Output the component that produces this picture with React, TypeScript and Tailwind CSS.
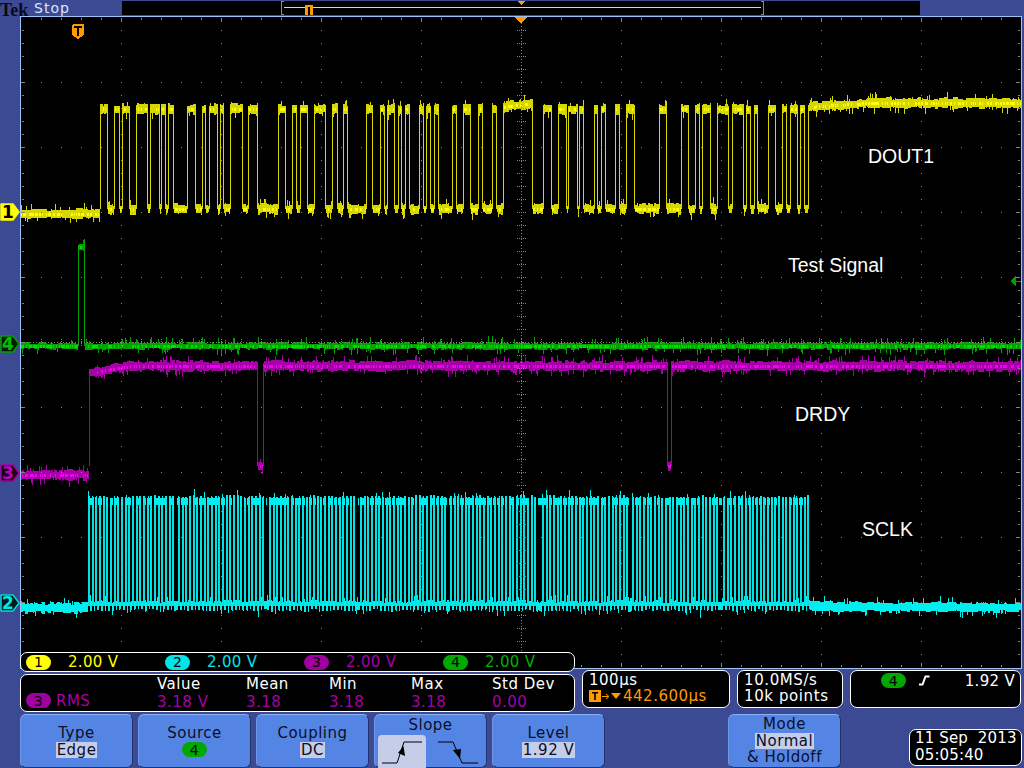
import React from 'react';

type Pair = [number, number];

type TraceSpec = {
  pairs: Pair[];
  seed: number;
  hi: (x: number) => number;
  lo: (x: number) => number;
  half: number;
  bridge?: boolean;
};

const makeRandom = (seed: number) => {
  let s = seed;
  return () => {
    s = (s * 1664525 + 1013904223) % 4294967296;
    return s / 4294967296;
  };
};

const bar = (x: number, y0: number, y1: number, w = 1) => `M${x} ${y0}h${w}V${y1}h-${w}z`;

// builds the noisy band and the thin edges of one channel, column by column
const makeTrace = ({ pairs, seed, hi, lo, half, bridge }: TraceSpec) => {
  const rand = makeRandom(seed);
  let base = '';
  let bright = '';
  let edges = '';
  let up = half;
  let down = half;
  let p = 0;
  for (let x = 21; x < 1021; x++) {
    while (p < pairs.length && x > pairs[p][1]) p++;
    const high = p < pairs.length && x >= pairs[p][0];
    const y = high ? hi(x) : lo(x);
    if (rand() < 0.4) {
      up = half * 0.7 + rand() * half * 0.6;
      down = half * 0.7 + rand() * half * 0.6;
    }
    const spikeUp = rand() < 0.09 ? 2 + rand() * 4 : 0;
    const spikeDown = rand() < 0.09 ? 2 + rand() * 4 : 0;
    base += bar(x, Math.round(y - up - spikeUp), Math.round(y + down + spikeDown));
    if (rand() < 0.5) bright += bar(x, Math.round(y - 1), Math.round(y + 2));
    if (bridge && !high && x > pairs[0][0] && x < pairs[pairs.length - 1][1] && rand() < 0.5) {
      base += bar(x, Math.round(hi(x) - 3), Math.round(hi(x) + 4));
    }
  }
  pairs.forEach(([rise, fall]) => {
    [rise, fall].forEach((x) => {
      if (x < 1020) edges += bar(x, Math.round(hi(x)), Math.round(lo(x)));
    });
  });
  return { base, bright, edges };
};

const yellowPairs: Pair[] = [
  [100, 107], [114, 119], [122, 129], [136, 147], [150, 159], [161, 165], [168, 173], [187, 195],
  [202, 205], [209, 217], [220, 223], [230, 242], [248, 257], [278, 285], [292, 296], [300, 307],
  [314, 325], [332, 337], [343, 347], [366, 372], [380, 384], [387, 394], [398, 401], [405, 409],
  [419, 423], [426, 430], [434, 438], [452, 456], [463, 470], [478, 482], [492, 496], [503, 532],
  [543, 551], [558, 566], [568, 577], [579, 583], [594, 597], [601, 605], [615, 619], [626, 634],
  [659, 666], [681, 688], [695, 699], [702, 710], [717, 728], [732, 743], [746, 750], [754, 757],
  [768, 775], [782, 786], [790, 797], [800, 804], [808, 1021],
];

const clockStarts = [88, 178, 269, 360, 450, 542, 632, 723];
const clockPairs: Pair[] = clockStarts.flatMap((start) =>
  Array.from({ length: 24 }, (_, i): Pair => {
    const rise = Math.round(start + i * 3.66);
    return [rise, rise + 1];
  })
);

const yellow = makeTrace({
  pairs: yellowPairs,
  seed: 11,
  half: 4.5,
  hi: (x) => (x > 808 ? Math.max(103, 107 - (x - 808) / 15) : x > 503 && x < 533 ? 107 - (x - 503) / 7 : 109),
  lo: (x) => (x < 100 ? 214 : 209),
});
const green = makeTrace({ pairs: [[78, 84]], seed: 5, half: 3, hi: () => 247, lo: () => 346 });
const magenta = makeTrace({
  pairs: [[89, 257], [263, 667], [671, 1021]],
  seed: 23,
  half: 4.5,
  hi: (x) => (x < 130 ? 366 + (130 - x) / 6 : 366),
  lo: (x) => (x < 89 ? 475 : 466),
});
const cyan = makeTrace({
  pairs: clockPairs,
  seed: 37,
  half: 4.5,
  hi: () => 501,
  lo: (x) => (x < 88 ? 608 : x > 830 ? 607 : 606),
  bridge: true,
});

const makeGrid = () => {
  let d = '';
  for (let k = 1; k < 10; k++) {
    const y = 17 + 65 * k;
    if (k !== 5) for (let x = 41; x < 1020; x += 20) d += bar(x, y, y + 1);
    d += bar(21, y, y + 1, 4);
    d += bar(1016, y, y + 1, 4);
  }
  for (let i = 0; i < 9; i++) {
    const x = 121 + 100 * i;
    if (x !== 521) for (let y = 30; y < 667; y += 13) d += bar(x, y, y + 1);
    d += bar(x, 18, 22);
    d += bar(x, 663, 667);
  }
  for (let y = 30; y < 667; y += 13) {
    d += bar(22, y, y + 1, 2);
    d += bar(1018, y, y + 1, 2);
  }
  for (let x = 41; x < 1020; x += 20) {
    d += bar(x, 18, 20);
    d += bar(x, 665, 667);
    for (let y = 339; y < 346; y += 2) d += bar(x, y, y + 1);
  }
  // center cross
  for (let y = 23; y < 667; y += 3) d += bar(521, y, y + 1);
  for (let y = 30; y < 667; y += 13) {
    for (let x = 517; x < 526; x += 2) d += bar(x, y, y + 1);
  }
  for (let x = 24; x < 1018; x += 3) d += bar(x, 342, 343);
  return d;
};
const gridPath = makeGrid();

const Graticule = () => (
  <svg width={1000} height={651} viewBox="21 17 1000 651" shapeRendering="crispEdges" className="block">
    <path d={green.base} fill="#00a400" />
    <path d={green.bright} fill="#00e000" />
    <path d={green.edges} fill="#00a000" />
    <path d={magenta.base} fill="#a800a8" />
    <path d={magenta.bright} fill="#f000f0" />
    <path d={magenta.edges} fill="#a000a0" />
    <path d={yellow.base} fill="#d6d600" />
    <path d={yellow.bright} fill="#ffff00" />
    <path d={yellow.edges} fill="#d8d800" />
    <path d={cyan.edges} fill="#00e2e2" />
    <path d={cyan.base} fill="#00eeee" />
    <path d={gridPath} fill="#86866f" />
    {/* trigger position, time reference, channel 4 level */}
    <polygon points="515,17 527,17 521,24" fill="#ff9a00" />
    <polygon points="72,25 73,24 83,24 84,25 84,35 78,39 72,35" fill="#ff9a00" />
    <path d="M74 26h8v2h-3v8h-2v-8h-3z" fill="#000" />
    <polygon points="1010,281 1016,276 1016,286" fill="#00a000" />
    <rect x={1016} y={280.5} width={5} height={1} fill="#00a000" />
  </svg>
);

const RecordView = () => (
  <svg width={798} height={14} viewBox="122 1 798 14" shapeRendering="crispEdges" className="block">
    <path d="M281 1h3v1h-2v12h2v1h-3z" fill="#8a8a8a" />
    <path d="M761 1h3v14h-3v-1h2V2h-2z" fill="#8a8a8a" />
    <rect x={284} y={7} width={477} height={1} fill="#f0f000" />
    <rect x={305} y={5} width={8} height={10} fill="#ff9a00" />
    <rect x={308} y={7} width={2} height={8} fill="#000" />
    <polygon points="518,1 525,1 521.5,5" fill="#ff9a00" />
  </svg>
);

const ChannelMarker = ({ label, top, fill, stroke, color }: { label: string; top: string; fill: string; stroke: string; color: string }) => (
  <div className={`absolute left-0 w-[20px] h-[18px] ${top}`}>
    <svg width={20} height={18} className="absolute inset-0">
      <polygon points="1,1 13,1 19,9 13,17 1,17" fill={fill} stroke={stroke} strokeWidth={1.5} strokeLinejoin="round" />
    </svg>
    <span className={`absolute left-[1px] top-0 w-[14px] text-center text-[17px] leading-[18px] font-bold tracking-normal ${color}`}>{label}</span>
  </div>
);

const Badge = ({ n, className }: { n: string; className: string }) => (
  <span className={`inline-flex items-center justify-center w-[25px] h-[15px] rounded-full text-[14px] leading-none text-black ${className}`}>
    {n}
  </span>
);

const ChannelScale = ({ n, badge, text }: { n: string; badge: string; text: string }) => (
  <div className="flex items-center shrink-0 w-[139px] gap-[17px] tracking-[0.3px]">
    <Badge n={n} className={badge} />
    <span className={text}>2.00 V</span>
  </div>
);

const MenuButton = ({ children }: { children: React.ReactNode }) => (
  <div className="flex flex-col items-center justify-center w-[113px] h-[54px] rounded-[6px] border border-t-[#8ab0f4] border-l-[#6f98ea] border-r-[#22326c] border-b-[#22326c] bg-[#5585e4] text-[#0a1028] leading-[17px]">
    {children}
  </div>
);

const Picked = ({ children }: { children: React.ReactNode }) => (
  <span className="bg-[#c6cde8] leading-[16px] px-px">{children}</span>
);

const stats = [
  ['Value', '3.18 V'],
  ['Mean', '3.18'],
  ['Min', '3.18'],
  ['Max', '3.18'],
  ['Std Dev', '0.00'],
];

const traceLabel = "absolute font-['Liberation_Sans',sans-serif] text-[19.5px] tracking-normal leading-[22px]";

export default function App() {
  return (
    <div className="relative flex flex-col w-[1024px] h-[768px] overflow-hidden bg-[#3c4a94] font-['DejaVu_Sans',sans-serif] text-[15px] tracking-[0.5px] text-white">
      <header className="flex h-[16px] shrink-0">
        <div className="w-[34px] font-['Liberation_Serif',serif] font-bold text-[18px] leading-[20px] h-[16px] tracking-normal text-[#0a0a14]">Tek</div>
        <div className="w-[88px] text-[14px] leading-[16px] tracking-[1px] text-[#dbe5fb]">Stop</div>
        <div className="w-[798px] h-[14px] mt-px bg-black">
          <RecordView />
        </div>
      </header>

      <div className="relative flex pl-[20px]">
        <ChannelMarker label="1" top="top-[187px]" fill="#ffff00" stroke="#ffff00" color="text-black" />
        <ChannelMarker label="4" top="top-[319px]" fill="#041a04" stroke="#00a000" color="text-[#00c000]" />
        <ChannelMarker label="3" top="top-[448px]" fill="#1a021a" stroke="#a000a0" color="text-[#c000c0]" />
        <ChannelMarker label="2" top="top-[578px]" fill="#021a1a" stroke="#00d8d8" color="text-[#00e8e8]" />
        <div className="relative w-[1002px] h-[653px] border border-[#9cc2fa] bg-black">
          <Graticule />
          <span className={`${traceLabel} left-[847px] top-[128px]`}>DOUT1</span>
          <span className={`${traceLabel} left-[767px] top-[237px]`}>Test Signal</span>
          <span className={`${traceLabel} left-[774px] top-[386px]`}>DRDY</span>
          <span className={`${traceLabel} left-[841px] top-[501px]`}>SCLK</span>
        </div>
      </div>

      <div className="relative flex -mt-[17px] pl-[20px]">
        <div className="flex flex-col gap-[2px] w-[555px]">
          <div className="flex items-center h-[20px] pl-[5px] rounded-[7px] border border-white bg-black">
            <ChannelScale n="1" badge="bg-[#ffff00]" text="text-[#ffff00]" />
            <ChannelScale n="2" badge="bg-[#00e6e6]" text="text-[#00e6e6]" />
            <ChannelScale n="3" badge="bg-[#a000a0]" text="text-[#a800a8]" />
            <ChannelScale n="4" badge="bg-[#00a800]" text="text-[#00b000]" />
          </div>
          <div className="grid grid-cols-[136px_89px_83px_82px_81px_auto] h-[38px] rounded-[7px] border border-white bg-black leading-[18px]">
            <div className="flex items-end pl-[5px] gap-[5px] pb-px text-[#a800a8]">
              <Badge n="3" className="bg-[#a000a0] mb-[2px]" />
              <span>RMS</span>
            </div>
            {stats.map(([name, value]) => (
              <div key={name} className="flex flex-col">
                <span className="whitespace-nowrap">{name}</span>
                <span className="text-[#a800a8]">{value}</span>
              </div>
            ))}
          </div>
        </div>

        <div className="flex gap-[7px] ml-[7px] pt-[18px] h-[56px] leading-[16px]">
          <div className="w-[148px] h-[38px] pl-[6px] pt-px rounded-[7px] border border-white bg-black">
            <div>100µs</div>
            <div className="flex items-center text-[#ff9a00]">
              <svg width={33} height={13} viewBox="0 0 33 13" className="shrink-0">
                <rect x={0} y={0} width={12} height={12} fill="#ff9a00" />
                <path d="M3 2h6v1.500H6.800V10H5.200V3.500H3z" fill="#000" />
                <path d="M13 6.500h6M17 4l3 2.500-3 2.500" stroke="#ff9a00" fill="none" />
                <polygon points="22,3 32,3 27,9" fill="#ff9a00" />
              </svg>
              <span className="ml-px">442.600µs</span>
            </div>
          </div>
          <div className="w-[106px] h-[38px] pl-[6px] pt-px rounded-[7px] border border-white bg-black tracking-[0.6px]">
            <div>10.0MS/s</div>
            <div>10k points</div>
          </div>
          <div className="flex items-start w-[171px] h-[38px] pt-[2px] pr-[5px] rounded-[7px] border border-white bg-black">
            <Badge n="4" className="bg-[#00a800] ml-[30px]" />
            <svg width={11} height={11} viewBox="0 0 11 11" className="ml-[13px] mt-[2px]">
              <path d="M0 9.500h3.500L6.500 1.500H10.500" stroke="#fff" strokeWidth={2} fill="none" />
            </svg>
            <span className="ml-auto tracking-[0.3px]">1.92 V</span>
          </div>
        </div>
      </div>

      <div className="flex items-start gap-[5px] mt-[2px] pl-[20px]">
        <MenuButton>
          <span>Type</span>
          <Picked>Edge</Picked>
        </MenuButton>
        <MenuButton>
          <span>Source</span>
          <Badge n="4" className="bg-[#00a800]" />
        </MenuButton>
        <MenuButton>
          <span>Coupling</span>
          <Picked>DC</Picked>
        </MenuButton>
        <div className="flex flex-col items-center w-[113px] h-[54px] rounded-[6px] border border-t-[#8ab0f4] border-l-[#6f98ea] border-r-[#22326c] border-b-[#22326c] bg-[#5585e4] text-[#0a1028] leading-[20px]">
          <span>Slope</span>
          <div className="flex w-full pl-[3px]">
            <div className="w-[48px] h-[33px] rounded-t-[4px] bg-[#c6cde8]">
              <svg width={48} height={33} viewBox="0 0 48 33">
                <path d="M4 28H19L26 7H44" stroke="#000" fill="none" />
                <polygon points="25.500,11 27,21 20,18" fill="#000" />
              </svg>
            </div>
            <svg width={50} height={33} viewBox="0 0 50 33" className="ml-[3px]">
              <path d="M9 7H24L33 28H49" stroke="#000" fill="none" />
              <polygon points="31,24 24,15 32,14" fill="#000" />
            </svg>
          </div>
        </div>
        <MenuButton>
          <span>Level</span>
          <Picked>1.92 V</Picked>
        </MenuButton>
        <div className="ml-[118px]">
          <MenuButton>
            <span>Mode</span>
            <Picked>Normal</Picked>
            <span>&amp; Holdoff</span>
          </MenuButton>
        </div>
        <div className="ml-[63px] mt-[15px] w-[113px] h-[37px] pl-[5px] rounded-[7px] border border-white bg-black leading-[17px] tracking-[0.15px] whitespace-pre">
          <div>11 Sep  2013</div>
          <div>05:05:40</div>
        </div>
      </div>
    </div>
  );
}
